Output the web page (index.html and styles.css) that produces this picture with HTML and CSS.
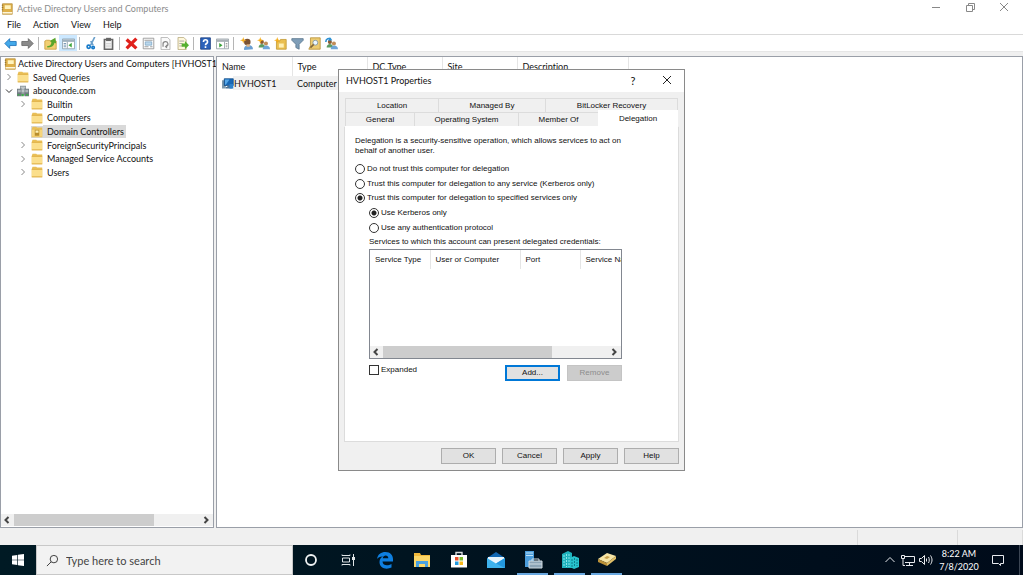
FILE: index.html
```html
<!DOCTYPE html>
<html lang="en">
<head>
    <meta charset="UTF-8">
    <meta name="viewport" content="width=device-width, initial-scale=1.0">
    <title>Active Directory Users and Computers</title>
    <link rel="stylesheet" href="styles.css">
</head>
<body>
    <!-- shared icons -->
    <svg class="defs" width="0" height="0">
        <symbol id="book" viewBox="0 0 16 16">
            <path d="M2 1h13v14H2z" fill="#dfb14a" stroke="#b58f3c"/>
            <path d="M5 3h8v5H5z" fill="#fff3bd"/>
            <path d="M2 12h13v2H2z" fill="#fdf6dc"/>
            <path d="M1 3h2M1 6h2M1 9h2" stroke="#8a6a20"/>
        </symbol>
        <symbol id="folder" viewBox="0 0 16 16">
            <path d="M1 4l1-3h5l1 1h7v13H1z" fill="#e9bf57"/>
            <path d="M1 5h14v9H1z" fill="#fbdf8c"/>
            <path d="M1 4.500h14M1 14.500h14" stroke="#dcae45"/>
        </symbol>
        <symbol id="ou" viewBox="0 0 16 16">
            <path d="M1 4l1-3h5l1 1h7v13H1z" fill="#e9bf57"/>
            <path d="M1 5h14v9H1z" fill="#f6d57c"/>
            <path d="M5 5h6v8H5z" fill="#b98d2b"/>
            <path d="M6 6h4v3H6z" fill="#fff0b5"/>
        </symbol>
        <symbol id="domain" viewBox="0 0 16 16">
            <path d="M4 1h8v13H4z" fill="#8f989d"/>
            <path d="M0 5h6v10H0zM10 5h6v10h-6z" fill="#6f7a80"/>
            <path d="M5 3h6M6 5h4M6 7h4M6 9h4M1 7h4M1 9h4M11 7h4M11 9h4" stroke="#e4e9eb"/>
            <path d="M1 12h2v2H1zM6 12h3v3H6zM12 12h3v2h-3z" fill="#3fae4a"/>
        </symbol>
        <symbol id="people" viewBox="0 0 16 16">
            <circle cx="6" cy="6" r="2.500" fill="#8a5c33"/>
            <path d="M2 13c0-6 8-6 8 0z" fill="#5d9b62"/>
            <circle cx="11" cy="8" r="2.500" fill="#c18d58"/>
            <path d="M7 15c0-6 9-6 9 0z" fill="#6ea6d9"/>
        </symbol>
        <symbol id="star" viewBox="0 0 16 16">
            <path d="M4 0l1 3 3 1-3 1-1 3-1-3-3-1 3-1z" fill="#f5ae1d"/>
        </symbol>
        <symbol id="chev-right" viewBox="0 0 8 8"><path d="M2.500 1l3 3-3 3" fill="none" stroke="currentColor"/></symbol>
        <symbol id="chev-left" viewBox="0 0 8 8"><path d="M5.500 1l-3 3 3 3" fill="none" stroke="currentColor"/></symbol>
        <symbol id="chev-down" viewBox="0 0 8 8"><path d="M1 2.500l3 3 3-3" fill="none" stroke="currentColor"/></symbol>
    </svg>

    <header class="titlebar">
        <svg class="icon-title"><use href="#book"/></svg>
        <h1>Active Directory Users and Computers</h1>
        <div class="window-controls">
            <button aria-label="Minimize"><svg viewBox="0 0 10 10"><path d="M1 5.500h8"/></svg></button>
            <button aria-label="Restore"><svg viewBox="0 0 10 10"><path d="M1.500 3.500h6v6h-6zM3.500 3V1.500h6v6H8"/></svg></button>
            <button aria-label="Close"><svg viewBox="0 0 10 10"><path d="M1 1l8 8M9 1L1 9"/></svg></button>
        </div>
    </header>

    <nav class="menubar">
        <button>File</button>
        <button>Action</button>
        <button>View</button>
        <button>Help</button>
    </nav>

    <div class="toolbar">
        <button aria-label="Back"><svg viewBox="0 0 16 16"><path d="M1 8l6-6v3.500h8v5H7V14z" fill="#43a9ea" stroke="#1b6fb8"/></svg></button>
        <button aria-label="Forward"><svg viewBox="0 0 16 16"><path d="M15 8L9 2v3.500H1v5h8V14z" fill="#8b8b8b" stroke="#666"/></svg></button>
        <span class="sep"></span>
        <button aria-label="Up one level"><svg viewBox="0 0 16 16"><path d="M1 5l2-1h4l1 1h7v10H1z" fill="#f2cf72" stroke="#c79d3e"/><path d="M4 11c4 0 5-2 5-5L7 5l7-4 1 7-2-1c-1 4-4 6-9 6z" fill="#5aa62c"/></svg></button>
        <button class="on" aria-label="Show console tree"><svg viewBox="0 0 16 16"><path d="M.5 2.500h15v12H.5z" fill="#fff" stroke="#8597a5"/><path d="M1 3h14v3H1z" fill="#9fb0bd"/><path d="M2 8h3M2 10h3M2 12h3" stroke="#5f84a6"/><path d="M6.500 6v8" stroke="#8597a5"/><path d="M12 7v6l-4-3z" fill="#3ea63e"/></svg></button>
        <span class="sep"></span>
        <button aria-label="Cut"><svg viewBox="0 0 16 16"><path d="M12 0L7 10M7 5l3 5" stroke="#6ba0cb" stroke-width="2"/><circle cx="4.500" cy="12" r="2" fill="none" stroke="#1479c9" stroke-width="2"/><circle cx="10" cy="13" r="1.500" fill="none" stroke="#1479c9" stroke-width="2"/></svg></button>
        <button aria-label="Paste"><svg viewBox="0 0 16 16"><path d="M3 3h10v12H3z" fill="#f6f6f6" stroke="#666" stroke-width="2"/><path d="M5 1h6v4H5z" fill="#666"/><path d="M5 8h6M5 10h6M5 12h6" stroke="#ccc"/></svg></button>
        <span class="sep"></span>
        <button aria-label="Delete"><svg viewBox="0 0 16 16"><path d="M2 3l12 11M14 2L2 14" stroke="#e0201b" stroke-width="4"/></svg></button>
        <button aria-label="Properties"><svg viewBox="0 0 16 16"><path d="M1.500 1.500h13v13h-13z" fill="#fff" stroke="#8c8c8c"/><path d="M3 4h10M3 12h5M10 12h3" stroke="#888"/><path d="M4 6h8v4H4z" fill="#bcd8ec" stroke="#7fa9c8"/></svg></button>
        <button aria-label="Refresh"><svg viewBox="0 0 16 16"><path d="M2.500.5h8l3 3v12h-11z" fill="#fafafa" stroke="#aaa"/><path d="M5 12V9a3 3 0 1 1 4 2.500" fill="none" stroke="#888" stroke-width="1.500"/><path d="M10 9v5l-3-2z" fill="#888"/></svg></button>
        <button aria-label="Export list"><svg viewBox="0 0 16 16"><path d="M2.500.5h7l3 3v12h-10z" fill="#fff8dc" stroke="#b5a77a"/><path d="M4 5h6M4 8h4M4 11h4" stroke="#999"/><path d="M7 8h4V5l5 5-5 5v-3H7z" fill="#56b030"/></svg></button>
        <span class="sep"></span>
        <button aria-label="Help"><svg viewBox="0 0 16 16"><path d="M2 1h12v14H2z" fill="#2c63bb" stroke="#1b3f80"/><path d="M5.500 6c0-3.500 5-3.500 5 0 0 2-2.500 2-2.500 4M8 11.500v2" fill="none" stroke="#fff" stroke-width="2"/></svg></button>
        <button aria-label="Action pane"><svg viewBox="0 0 16 16"><path d="M.5 2.500h15v12H.5z" fill="#fff" stroke="#8c979e"/><path d="M1 3h14v3H1z" fill="#a9b1b6"/><path d="M10.500 6v8" stroke="#8c979e"/><path d="M4 7.500l4 2.500-4 3z" fill="#36a136"/><path d="M12 8h2M12 10h2M12 12h2" stroke="#888"/></svg></button>
        <span class="sep wide"></span>
        <button aria-label="New user"><svg viewBox="0 0 16 16"><path d="M5 16c-1-8 11-8 11-1z" fill="#6a9fd2"/><circle cx="9" cy="6" r="4" fill="#7a5233"/><path d="M8 9h4v3H8z" fill="#e1b88b"/><use href="#star"/></svg></button>
        <button aria-label="New group"><svg viewBox="0 0 16 16"><use href="#people"/><use href="#star"/></svg></button>
        <button aria-label="New organizational unit"><svg viewBox="0 0 16 16"><path d="M3 5h4l1-2h7v12H3z" fill="#eabf50" stroke="#c39a35"/><path d="M6 8h6v5H6z" fill="#fff0b5"/><use href="#star"/></svg></button>
        <button aria-label="Filter"><svg viewBox="0 0 16 16"><path d="M1 2h14v2L10 9v6l-4-2V9L1 4z" fill="#7f9eb8" stroke="#58758d"/></svg></button>
        <button aria-label="Find"><svg viewBox="0 0 16 16"><path d="M3 1h12v14H1l2-4z" fill="#eccb70" stroke="#b89139"/><circle cx="9" cy="7" r="3" fill="#eef8ff" stroke="#7791a5"/><path d="M7 9l-4 4" stroke="#80663a" stroke-width="2"/></svg></button>
        <button aria-label="Add to group"><svg viewBox="0 0 16 16"><use href="#people"/><path d="M1 6c0-4 4-5 6-3" fill="none" stroke="#2d91d4" stroke-width="2"/><path d="M6 0l3 4-5 1z" fill="#2d91d4"/></svg></button>
    </div>

    <main class="workspace">
        <section class="tree-pane">
            <ul class="tree">
                <li class="root"><svg class="icon"><use href="#book"/></svg><span>Active Directory Users and Computers [HVHOST1</span></li>
                <li class="level-1"><svg class="chev"><use href="#chev-right"/></svg><svg class="icon"><use href="#folder"/></svg><span>Saved Queries</span></li>
                <li class="level-1"><svg class="chev open"><use href="#chev-down"/></svg><svg class="icon"><use href="#domain"/></svg><span>abouconde.com</span></li>
                <li class="level-2"><svg class="chev"><use href="#chev-right"/></svg><svg class="icon"><use href="#folder"/></svg><span>Builtin</span></li>
                <li class="level-2"><i class="chev"></i><svg class="icon"><use href="#folder"/></svg><span>Computers</span></li>
                <li class="level-2 selected"><i class="chev"></i><svg class="icon"><use href="#ou"/></svg><span>Domain Controllers</span></li>
                <li class="level-2"><svg class="chev"><use href="#chev-right"/></svg><svg class="icon"><use href="#folder"/></svg><span>ForeignSecurityPrincipals</span></li>
                <li class="level-2"><svg class="chev"><use href="#chev-right"/></svg><svg class="icon"><use href="#folder"/></svg><span>Managed Service Accounts</span></li>
                <li class="level-2"><svg class="chev"><use href="#chev-right"/></svg><svg class="icon"><use href="#folder"/></svg><span>Users</span></li>
            </ul>
            <div class="scrollbar">
                <svg><use href="#chev-left"/></svg>
                <div class="track"><div class="thumb"></div></div>
                <svg><use href="#chev-right"/></svg>
            </div>
        </section>

        <section class="list-pane">
            <table class="objects">
                <thead>
                    <tr><th class="name">Name</th><th class="col">Type</th><th class="col">DC Type</th><th class="col">Site</th><th class="desc">Description</th></tr>
                </thead>
                <tbody>
                    <tr>
                        <td class="name"><svg viewBox="0 0 16 16"><path d="M0 3h5v11H0z" fill="#7d98ab"/><path d="M3 1h12v9H3z" fill="#1767b5" stroke="#0d4a86"/><path d="M4 2h6L5 9H4z" fill="#55a7e8"/><path d="M7 10h4v2h3v2H5v-2h2z" fill="#4b7396"/><path d="M10 8h5v6h-5z" fill="#2b80cc"/></svg><span>HVHOST1</span></td>
                        <td>Computer</td><td></td><td></td><td></td>
                    </tr>
                </tbody>
            </table>
        </section>
    </main>

    <footer class="statusbar"><span></span><span></span><span></span></footer>

    <div class="dialog" role="dialog" aria-labelledby="dialog-title">
        <div class="dialog-title">
            <h2 id="dialog-title">HVHOST1 Properties</h2>
            <button aria-label="Help">?</button>
            <button aria-label="Close"><svg viewBox="0 0 10 10"><path d="M1 1l8 8M9 1L1 9"/></svg></button>
        </div>
        <div class="dialog-body">
            <div class="tabs back-row">
                <button>Location</button>
                <button>Managed By</button>
                <button>BitLocker Recovery</button>
            </div>
            <div class="tabs front-row">
                <button>General</button>
                <button>Operating System</button>
                <button>Member Of</button>
                <button class="active">Delegation</button>
            </div>
            <form class="panel" id="delegation">
                <p>Delegation is a security-sensitive operation, which allows services to act on<br>behalf of another user.</p>
                <div class="options">
                    <label><input type="radio" name="trust">Do not trust this computer for delegation</label>
                    <label><input type="radio" name="trust">Trust this computer for delegation to any service (Kerberos only)</label>
                    <label><input type="radio" name="trust" checked>Trust this computer for delegation to specified services only</label>
                    <label class="nested"><input type="radio" name="protocol" checked>Use Kerberos only</label>
                    <label class="nested"><input type="radio" name="protocol">Use any authentication protocol</label>
                </div>
                <div class="services">
                    <div class="caption">Services to which this account can present delegated credentials:</div>
                    <div class="listbox">
                        <table>
                            <thead>
                                <tr><th class="c-type">Service Type</th><th class="c-user">User or Computer</th><th class="c-port">Port</th><th class="c-name">Service Name</th></tr>
                            </thead>
                        </table>
                        <div class="scrollbar">
                            <svg><use href="#chev-left"/></svg>
                            <div class="track"><div class="thumb"></div></div>
                            <svg><use href="#chev-right"/></svg>
                        </div>
                    </div>
                    <div class="actions">
                        <label><input type="checkbox">Expanded</label>
                        <button type="button" class="btn default">Add...</button>
                        <button type="button" class="btn" disabled>Remove</button>
                    </div>
                </div>
            </form>
            <div class="dialog-buttons">
                <button class="btn">OK</button>
                <button class="btn">Cancel</button>
                <button class="btn">Apply</button>
                <button class="btn">Help</button>
            </div>
        </div>
    </div>

    <div class="taskbar">
        <button class="start" aria-label="Start"><svg viewBox="0 0 12 12"><path d="M0 1.700l5.300-.8v4.800H0zM6 .8L12 0v5.700H6zM0 6.300h5.300v4.800L0 10.300zM6 6.300h6V12l-6-.8z" fill="#fff"/></svg></button>
        <label class="search">
            <svg viewBox="0 0 14 14"><circle cx="8.500" cy="5.500" r="4" fill="none" stroke="#333"/><path d="M5.500 8.500L1 13" stroke="#333"/></svg>
            <input type="text" aria-label="Search" placeholder="Type here to search">
        </label>
        <div class="apps">
            <button aria-label="Cortana"><svg viewBox="0 0 20 20"><circle cx="10" cy="10" r="5" fill="none" stroke="#f0f3f4" stroke-width="1.800"/></svg></button>
            <button aria-label="Task view"><svg viewBox="0 0 20 20"><path d="M4 4.500v1h8v-1M4 15.500v-1h8v1M4.500 8h7v4h-7zM15.500 4v3M15.500 10v6" fill="none" stroke="#dfe4e6"/><path d="M14 7h3v3h-3z" fill="#dfe4e6"/></svg></button>
            <button aria-label="Edge"><svg viewBox="0 0 20 20"><path d="M2 9C3 4 6 2 10.500 2 15.500 2 18 5.500 18 9v2.500H7.500c.3 4.500 5.500 4.500 9 2.500v3.500c-5 2.500-12 1-12-5.500 0-3 1.500-4.500 3.500-5.500C5 6.300 3.300 7.500 2 9zm5.700-.7h5.600c0-3.600-5-3.700-5.600 0z" fill="#0e7fe0"/></svg></button>
            <button aria-label="File Explorer"><svg viewBox="0 0 20 20"><path d="M2 3h6l1 2h9v12H2z" fill="#f1b83a"/><path d="M2 6h16v11H2z" fill="#fbd668"/><path d="M4 11h12v6h-3v-3H7v3H4z" fill="#4aa1e0"/></svg></button>
            <button aria-label="Store"><svg viewBox="0 0 20 20"><path d="M7 6V2.500h6V6" fill="none" stroke="#d8dcde" stroke-width="1.400"/><path d="M2 5h16v12.500H2z" fill="#fff"/><path d="M6 7h3.500v3.500H6z" fill="#e8502d"/><path d="M10.500 7H14v3.500h-3.500z" fill="#79b82a"/><path d="M6 11.500h3.500V15H6z" fill="#219ae0"/><path d="M10.500 11.500H14V15h-3.500z" fill="#f8b91b"/></svg></button>
            <button aria-label="Mail"><svg viewBox="0 0 20 20"><path d="M1 8l9-6 9 6v10H1z" fill="#1268b3"/><path d="M2 7h16v6l-8 2-8-2z" fill="#e8f5fc"/><path d="M1 8l9 5.500L19 8v10H1z" fill="#3eb2ec"/><path d="M10 13.500L19 8v10z" fill="#2397de"/></svg></button>
            <button class="running" aria-label="Server Manager"><svg viewBox="0 0 20 20"><path d="M2 1h9v16H2z" fill="#4b9ddb"/><path d="M3 3h7M3 5.500h7" stroke="#bfe2f7"/><path d="M6 11h13v7H6z" fill="#8ba3b4" stroke="#d0dbe2"/><path d="M9 11V9h7v2M6 14h13" fill="none" stroke="#d0dbe2"/></svg></button>
            <button class="running" aria-label="DNS"><svg viewBox="0 0 20 20"><path d="M2 4l6-3 4 2v15H2z" fill="#1fb2bd"/><path d="M10 8l4-2 5 2v9l-5 2-4-2z" fill="#27c3cd"/><path d="M4 5v12M6.500 4v13M9 4v13" stroke="#88e5ea" stroke-dasharray="2 1"/><path d="M12 9v8M14.500 8v9M17 9v7" stroke="#0f7d8c" stroke-dasharray="2 1"/></svg></button>
            <button class="running" aria-label="Active Directory"><svg viewBox="0 0 20 20"><path d="M1 9l9-6 9 3-9 7z" fill="#f6e5a6"/><path d="M1 9l9 4v3l-9-4z" fill="#bb9138"/><path d="M10 13l9-7v3l-9 7z" fill="#e0bf68"/><path d="M7 8l3-2 3 1-3 2z" fill="#c8a14c"/></svg></button>
        </div>
        <div class="tray">
            <button aria-label="Show hidden icons"><svg viewBox="0 0 14 14"><path d="M2.500 9L7 4.500 11.500 9"/></svg></button>
            <button aria-label="Network"><svg viewBox="0 0 14 14"><path d="M4 3.500h9.500v6H4M8.500 9.500v3M5 12.500h7M.5 2.500h3v3h-3zM2 5.500v7h2"/></svg></button>
            <button aria-label="Volume"><svg viewBox="0 0 14 14"><path d="M.5 5.500h2l3-3v9l-3-3h-2zM7.500 5.500v3M9.500 4c1 2 1 4 0 6M11.500 2.500c2 3 2 6 0 9"/></svg></button>
            <div class="clock"><time>8:22 AM</time><time>7/8/2020</time></div>
            <button class="notify" aria-label="Notifications"><svg viewBox="0 0 14 14"><path d="M1.500 2.500h11v8h-3v2l-2-2h-6z"/></svg></button>
            <span class="show-desktop"></span>
        </div>
    </div>
</body>
</html>
```
FILE: styles.css
```css
* {
    box-sizing: border-box;
}

body {
    font-family: Lato, "Liberation Sans", sans-serif;
    font-size: 9px;
    line-height: 13px;
    font-variant-ligatures: none;
    color: #111;
    margin: 0;
    min-height: 100vh;
    display: flex;
    flex-direction: column;
    background-color: #f0f0f0;
    position: relative;
    overflow: hidden;
}

button {
    font: inherit;
    color: inherit;
    background: none;
    border: none;
    padding: 0;
    margin: 0;
}

svg {
    display: block;
    flex: none;
}

.defs {
    position: absolute;
}

h1, h2 {
    font-size: 9px;
    font-weight: normal;
    margin: 0;
}

/* title, menu, toolbar */
.titlebar {
    display: flex;
    align-items: center;
    height: 17px;
    padding: 0 2px 0 1px;
    background-color: #fff;
    color: #8c8c8c;
}

.icon-title {
    width: 12px;
    height: 12px;
    margin-right: 4px;
}

.window-controls {
    display: flex;
    margin-left: auto;
}

.window-controls button {
    width: 34px;
    height: 15px;
    display: flex;
    justify-content: center;
    align-items: flex-start;
    padding-top: 1px;
}

.window-controls svg, .dialog-title svg {
    width: 10px;
    height: 10px;
    fill: none;
    stroke: #888;
}

.menubar {
    display: flex;
    gap: 12px;
    height: 17px;
    padding: 0 7px 2px;
    background-color: #fff;
}

.toolbar {
    display: flex;
    align-items: center;
    height: 18px;
    padding: 0 2px;
    background-color: #fff;
    border-top: 1px solid #d9d9d9;
    border-bottom: 1px solid #e6e6e6;
}

.toolbar button {
    width: 17px;
    height: 16px;
    display: flex;
    align-items: center;
    justify-content: center;
}

.toolbar button.on {
    width: 18px;
    background-color: #cce8ff;
}

.toolbar svg {
    width: 13px;
    height: 13px;
}

.sep {
    width: 1px;
    height: 13px;
    margin: 0 3px 0 2px;
    background-color: #b5b5b5;
}

.sep.wide {
    margin-right: 4px;
}

/* panes */
.workspace {
    flex: 1;
    display: flex;
    gap: 2px;
    padding-top: 4px;
}

.tree-pane, .list-pane {
    background-color: #fff;
    border: 1px solid #9a9fa8;
}

.tree-pane {
    width: 214px;
    display: flex;
    flex-direction: column;
    justify-content: space-between;
    padding-bottom: 1px;
}

.list-pane {
    flex: 1;
}

.tree {
    list-style: none;
    margin: 0;
    padding: 0 0 0 3px;
    display: grid;
    grid-auto-rows: 1fr;
    height: 122px;
}

.tree li {
    display: flex;
    align-items: center;
    white-space: nowrap;
    min-width: 0;
}

.tree .icon {
    width: 12px;
    height: 12px;
    margin-right: 2px;
}

.tree .root .icon {
    margin-right: 0;
}

.tree span {
    padding: 0 2px;
    line-height: 13px;
}

.tree .chev {
    width: 8px;
    height: 8px;
    margin: 0 4px 0 1px;
    color: #888;
}

.tree .chev.open {
    color: #333;
}

.tree .level-2 {
    padding-left: 14px;
}

.tree .selected .icon {
    margin-right: 0;
}

.tree .selected .icon, .tree .selected span {
    background-color: #d9d9d9;
}

.tree .selected span {
    padding-left: 4px;
}

.scrollbar {
    display: flex;
    align-items: center;
    height: 12px;
    background-color: #f0f0f0;
    color: #444;
}

.scrollbar svg {
    width: 8px;
    height: 8px;
    margin: 0 3px 0 2px;
    stroke-width: 2;
}

.scrollbar .track {
    flex: 1;
    height: 12px;
}

.scrollbar .thumb {
    width: 75%;
    height: 12px;
    background-color: #cdcdcd;
}

table {
    border-collapse: collapse;
    table-layout: fixed;
}

th, td {
    font-weight: normal;
    text-align: left;
    padding: 0;
    white-space: nowrap;
}

.objects {
    width: 412px;
}

.objects th {
    height: 19px;
    padding-left: 5px;
    border-right: 1px solid #e5e5e5;
}

.objects th.name {
    width: 75px;
}

.objects th.col {
    width: 75px;
}

.objects td {
    height: 14px;
    padding-left: 5px;
    background-color: #f0f0f0;
}

.objects td.name {
    background-image: linear-gradient(to right, #fff 16px, #f0f0f0 16px);
}

.name svg {
    width: 12px;
    height: 12px;
}

td.name svg, td.name span {
    display: inline-block;
    vertical-align: middle;
}

.statusbar {
    display: flex;
    justify-content: flex-end;
    height: 17px;
}

.statusbar span {
    width: 100px;
    height: 15px;
    margin-top: 2px;
    border-right: 1px solid #dadada;
}

.statusbar span:last-child {
    width: 65px;
}

/* properties dialog */
.dialog {
    position: absolute;
    top: 69px;
    left: 338px;
    width: 347px;
    background-color: #f0f0f0;
    border: 1px solid #8a8a8a;
}

.dialog-title {
    display: flex;
    align-items: center;
    height: 22px;
    padding: 0 0 2px 7px;
    background-color: #fff;
}

.dialog-title h2 {
    flex: 1;
}

.dialog-title button {
    width: 34px;
    font-size: 11px;
    display: flex;
    justify-content: center;
}

.dialog-title svg {
    stroke: #222;
}

.dialog-body {
    font-family: "Liberation Sans", Arial, sans-serif;
    font-size: 8px;
    line-height: 10px;
    padding: 6px 5px;
}

.tabs {
    display: flex;
    padding: 0 1px;
}

.tabs button {
    border: 1px solid #dcdcdc;
    border-width: 1px 0 0 1px;
    height: 14px;
    padding-top: 1px;
}

.tabs button:last-child {
    border-right-width: 1px;
}

.back-row button:nth-child(1) {
    width: 93px;
}

.back-row button:nth-child(2) {
    width: 107px;
}

.back-row button:nth-child(3) {
    flex: 1;
}

.front-row button:nth-child(1) {
    width: 69px;
}

.front-row button:nth-child(2) {
    width: 104px;
}

.front-row button:nth-child(3) {
    width: 80px;
}

.front-row .active {
    flex: 1;
    height: 16px;
    margin-top: -2px;
    padding-bottom: 1px;
    background-color: #fff;
    border-color: #fff;
}

.panel {
    height: 316px;
    padding: 9px 10px;
    background-color: #fff;
    border: 1px solid #dcdcdc;
    border-top-color: #fff;
}

.panel p {
    margin: 0 0 6px;
}

.options {
    display: grid;
    grid-auto-rows: 1fr;
    height: 73px;
}

.panel label {
    display: flex;
    align-items: center;
}

.panel input {
    appearance: none;
    width: 10px;
    height: 10px;
    margin: 0 2px 0 0;
    border: 1px solid #333;
    background-color: #fff;
}

.panel input[type="radio"] {
    border-radius: 50%;
}

.panel input[type="radio"]:checked {
    background-image: radial-gradient(circle, #222 2px, transparent 3px);
}

.nested {
    padding-left: 14px;
}

.services {
    margin: 2px 46px 0 14px;
}

.listbox {
    display: flex;
    flex-direction: column;
    justify-content: space-between;
    height: 110px;
    margin-top: 2px;
    border: 1px solid #828790;
    overflow: hidden;
}

.listbox table {
    width: 281px;
}

.listbox th {
    height: 19px;
    padding-left: 5px;
    border-right: 1px solid #e5e5e5;
}

.listbox .c-type {
    width: 60px;
}

.listbox .c-user {
    width: 90px;
}

.listbox .c-port {
    width: 60px;
}

.actions {
    display: flex;
    gap: 7px;
    align-items: flex-start;
    margin-top: 6px;
}

.actions label {
    margin-right: auto;
}

.actions input {
    margin-right: 2px;
}

.btn {
    width: 55px;
    height: 16px;
    background-color: #e1e1e1;
    border: 1px solid #adadad;
}

.btn.default {
    border: 2px solid #0078d7;
}

.btn:disabled {
    color: #8d8d8d;
    background-color: #cccccc;
    border-color: #c4c4c4;
}

.dialog-buttons {
    display: flex;
    justify-content: flex-end;
    gap: 6px;
    margin-top: 6px;
}

/* taskbar */
.taskbar {
    display: flex;
    height: 30px;
    background: linear-gradient(to right, #001a24, #000b1a);
    color: #fff;
}

.start {
    width: 36px;
    display: flex;
    align-items: center;
    justify-content: center;
}

.start svg {
    width: 12px;
    height: 12px;
}

.search {
    width: 257px;
    display: flex;
    align-items: center;
    gap: 7px;
    padding-left: 9px;
    background-color: #f2f2f2;
    border: 1px solid #c8c8c8;
}

.search svg {
    width: 13px;
    height: 13px;
}

.search input {
    flex: 1;
    min-width: 0;
    font: inherit;
    font-size: 11px;
    border: none;
    padding: 0;
    background: none;
}

.search input::placeholder {
    color: #444;
}

.apps {
    display: grid;
    grid-template-columns: repeat(9, 1fr);
    width: 332px;
}

.apps button {
    display: flex;
    align-items: center;
    justify-content: center;
    border-bottom: 2px solid transparent;
    padding-top: 2px;
    margin: 0 3px;
}

.apps .running {
    border-bottom-color: #69a8e0;
}

.apps svg {
    width: 20px;
    height: 20px;
}

.tray {
    display: flex;
    align-items: center;
    margin-left: auto;
}

.tray button {
    width: 18px;
    display: flex;
    justify-content: center;
}

.tray svg {
    width: 14px;
    height: 14px;
    fill: none;
    stroke: #e8eaee;
}

.clock {
    width: 48px;
    display: flex;
    flex-direction: column;
    align-items: center;
}

.tray .notify {
    width: 30px;
}

.show-desktop {
    width: 4px;
    height: 30px;
    margin-left: 6px;
    border-left: 1px solid #3c4654;
}
```
